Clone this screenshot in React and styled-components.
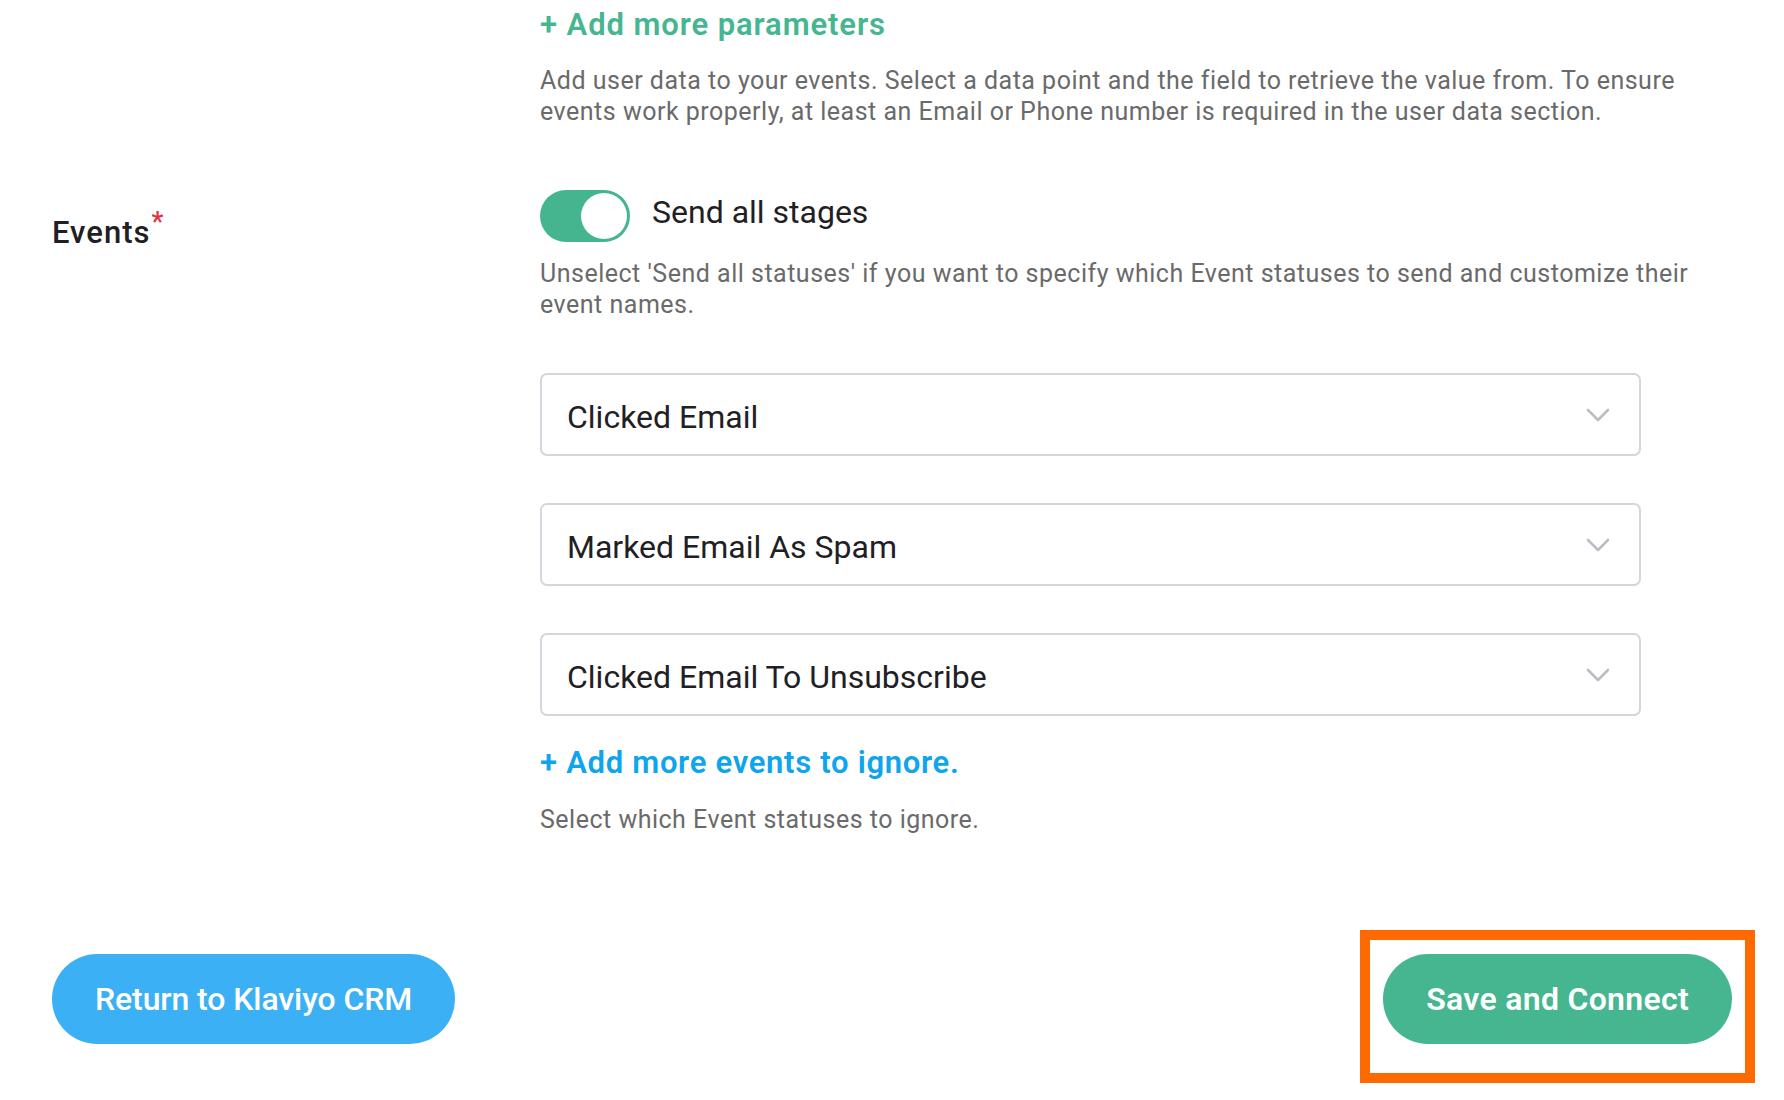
import styled, { createGlobalStyle } from "styled-components"

const GlobalStyle = createGlobalStyle`
    html, body {
        margin: 0;
        padding: 0;
        background: #ffffff;
    }
    body {
        font-family: Roboto, "Liberation Sans", sans-serif;
        color: #222428;
    }
`

const events = ["Clicked Email", "Marked Email As Spam", "Clicked Email To Unsubscribe"]

const Chevron = () => (
    <svg width="24" height="14" viewBox="0 0 24 14" fill="none">
        <path d="M2 2 L12 12 L22 2" stroke="#b9bec6" strokeWidth="2.6" strokeLinecap="round" strokeLinejoin="round" />
    </svg>
)

export default function App() {
    return (
        <>
            <GlobalStyle />
            <Page>
                <FormGrid>
                    <div />
                    <Column>
                        <AddLink $color="#45b68f">+ Add more parameters</AddLink>
                        <HelpText $top="22px">
                            Add user data to your events. Select a data point and the field to retrieve the value from. To ensure
                            events work properly, at least an Email or Phone number is required in the user data section.
                        </HelpText>
                    </Column>

                    <Label>
                        Events<Required>*</Required>
                    </Label>
                    <Column>
                        <ToggleRow>
                            <Toggle role="switch" aria-checked="true">
                                <Knob />
                            </Toggle>
                            <ToggleText>Send all stages</ToggleText>
                        </ToggleRow>
                        <HelpText $top="16px">
                            Unselect 'Send all statuses' if you want to specify which Event statuses to send and customize their
                            event names.
                        </HelpText>
                        <SelectList>
                            {events.map((name) => (
                                <Select key={name}>
                                    <SelectValue>{name}</SelectValue>
                                    <Chevron />
                                </Select>
                            ))}
                        </SelectList>
                        <AddLink $color="#0ea5ec" $top="29px" $spacing="0.7px">+ Add more events to ignore.</AddLink>
                        <HelpText $top="23px">Select which Event statuses to ignore.</HelpText>
                    </Column>
                </FormGrid>

                <Footer>
                    <Button $bg="#3bb0f5" $weight={500} $spacing="-0.1px">Return to Klaviyo CRM</Button>
                    <Highlight>
                        <Button $bg="#45b68f" $weight={600} $spacing="0.3px">Save and Connect</Button>
                    </Highlight>
                </Footer>
            </Page>
        </>
    )
}

const Page = styled.div`
    width: 1784px;
    height: 1100px;
    box-sizing: border-box;
    padding: 7px 52px 0;
    display: flex;
    flex-direction: column;
    overflow: hidden;
`

const FormGrid = styled.div`
    display: grid;
    grid-template-columns: 488px 1fr;
    row-gap: 63px;
`

const Column = styled.div`
    display: flex;
    flex-direction: column;
    align-items: flex-start;
`

const AddLink = styled.a`
    display: block;
    margin-top: ${(p) => p.$top || "0"};
    font-size: 31px;
    line-height: 36px;
    font-weight: 600;
    letter-spacing: ${(p) => p.$spacing || "0.9px"};
    color: ${(p) => p.$color};
    cursor: pointer;
`

const HelpText = styled.p`
    margin: ${(p) => p.$top || "0"} 0 0;
    font-size: 25px;
    line-height: 31px;
    letter-spacing: 0.5px;
    color: #6a6a6a;
`

const Label = styled.div`
    padding-top: 25px;
    font-size: 31px;
    line-height: 36px;
    font-weight: 500;
    letter-spacing: 1px;
    color: #1f2024;
`

const Required = styled.sup`
    color: #e2303f;
    font-size: 27px;
    line-height: 0;
    margin-left: 1px;
    vertical-align: 12px;
`

const ToggleRow = styled.div`
    display: flex;
    align-items: flex-start;
    gap: 22px;
`

const Toggle = styled.div`
    width: 90px;
    height: 52px;
    border-radius: 26px;
    background: #44b58e;
    display: flex;
    align-items: center;
    justify-content: flex-end;
    padding: 0 3px;
    box-sizing: border-box;
`

const Knob = styled.div`
    width: 46px;
    height: 46px;
    border-radius: 50%;
    background: #ffffff;
`

const ToggleText = styled.span`
    font-size: 32px;
    line-height: 44px;
    color: #1f2024;
`

const SelectList = styled.div`
    margin-top: 53px;
    width: 1101px;
    display: flex;
    flex-direction: column;
    gap: 47px;
`

const Select = styled.div`
    height: 83px;
    box-sizing: border-box;
    border: 2px solid #d3d7dd;
    border-radius: 7px;
    padding: 0 29px 0 25px;
    display: flex;
    align-items: center;
    justify-content: space-between;
    font-size: 32px;
    color: #1f2024;
`

const SelectValue = styled.span`
    padding-top: 4px;
`

const Footer = styled.div`
    margin-top: auto;
    margin-bottom: 56px;
    display: flex;
    justify-content: space-between;
    align-items: center;
`

const Highlight = styled.div`
    position: relative;

    &::after {
        content: "";
        position: absolute;
        inset: -24px -23px -39px -23px;
        border: 10px solid #ff6a00;
        pointer-events: none;
    }
`

const Button = styled.button`
    height: 90px;
    padding: 0 43px;
    border: none;
    border-radius: 45px;
    background: ${(p) => p.$bg};
    color: #ffffff;
    font-family: inherit;
    font-size: 32px;
    font-weight: ${(p) => p.$weight};
    letter-spacing: ${(p) => p.$spacing || "0"};
    cursor: pointer;
`
